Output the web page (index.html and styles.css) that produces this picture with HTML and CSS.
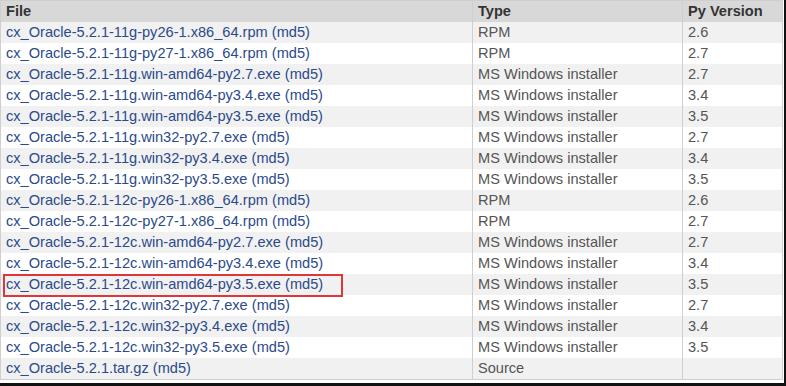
FILE: index.html
```html
<!DOCTYPE html>
<html>
<head>
<meta charset="utf-8">
<link rel="stylesheet" href="styles.css">
</head>
<body>
<div class="frame">
<table class="files">
<thead>
<tr><th class="c-file">File</th><th class="c-type">Type</th><th class="c-ver">Py Version</th></tr>
</thead>
<tbody>
<tr><td class="c-file"><a>cx_Oracle-5.2.1-11g-py26-1.x86_64.rpm</a> (<a>md5</a>)</td><td class="c-type">RPM</td><td class="c-ver">2.6</td></tr>
<tr><td class="c-file"><a>cx_Oracle-5.2.1-11g-py27-1.x86_64.rpm</a> (<a>md5</a>)</td><td class="c-type">RPM</td><td class="c-ver">2.7</td></tr>
<tr><td class="c-file"><a>cx_Oracle-5.2.1-11g.win-amd64-py2.7.exe</a> (<a>md5</a>)</td><td class="c-type">MS Windows installer</td><td class="c-ver">2.7</td></tr>
<tr><td class="c-file"><a>cx_Oracle-5.2.1-11g.win-amd64-py3.4.exe</a> (<a>md5</a>)</td><td class="c-type">MS Windows installer</td><td class="c-ver">3.4</td></tr>
<tr><td class="c-file"><a>cx_Oracle-5.2.1-11g.win-amd64-py3.5.exe</a> (<a>md5</a>)</td><td class="c-type">MS Windows installer</td><td class="c-ver">3.5</td></tr>
<tr><td class="c-file"><a>cx_Oracle-5.2.1-11g.win32-py2.7.exe</a> (<a>md5</a>)</td><td class="c-type">MS Windows installer</td><td class="c-ver">2.7</td></tr>
<tr><td class="c-file"><a>cx_Oracle-5.2.1-11g.win32-py3.4.exe</a> (<a>md5</a>)</td><td class="c-type">MS Windows installer</td><td class="c-ver">3.4</td></tr>
<tr><td class="c-file"><a>cx_Oracle-5.2.1-11g.win32-py3.5.exe</a> (<a>md5</a>)</td><td class="c-type">MS Windows installer</td><td class="c-ver">3.5</td></tr>
<tr><td class="c-file"><a>cx_Oracle-5.2.1-12c-py26-1.x86_64.rpm</a> (<a>md5</a>)</td><td class="c-type">RPM</td><td class="c-ver">2.6</td></tr>
<tr><td class="c-file"><a>cx_Oracle-5.2.1-12c-py27-1.x86_64.rpm</a> (<a>md5</a>)</td><td class="c-type">RPM</td><td class="c-ver">2.7</td></tr>
<tr><td class="c-file"><a>cx_Oracle-5.2.1-12c.win-amd64-py2.7.exe</a> (<a>md5</a>)</td><td class="c-type">MS Windows installer</td><td class="c-ver">2.7</td></tr>
<tr><td class="c-file"><a>cx_Oracle-5.2.1-12c.win-amd64-py3.4.exe</a> (<a>md5</a>)</td><td class="c-type">MS Windows installer</td><td class="c-ver">3.4</td></tr>
<tr><td class="c-file marked"><a>cx_Oracle-5.2.1-12c.win-amd64-py3.5.exe</a> (<a>md5</a>)<span class="highlight"></span></td><td class="c-type">MS Windows installer</td><td class="c-ver">3.5</td></tr>
<tr><td class="c-file"><a>cx_Oracle-5.2.1-12c.win32-py2.7.exe</a> (<a>md5</a>)</td><td class="c-type">MS Windows installer</td><td class="c-ver">2.7</td></tr>
<tr><td class="c-file"><a>cx_Oracle-5.2.1-12c.win32-py3.4.exe</a> (<a>md5</a>)</td><td class="c-type">MS Windows installer</td><td class="c-ver">3.4</td></tr>
<tr><td class="c-file"><a>cx_Oracle-5.2.1-12c.win32-py3.5.exe</a> (<a>md5</a>)</td><td class="c-type">MS Windows installer</td><td class="c-ver">3.5</td></tr>
<tr><td class="c-file"><a>cx_Oracle-5.2.1.tar.gz</a> (<a>md5</a>)</td><td class="c-type">Source</td><td class="c-ver"></td></tr>
</tbody>
</table>
</div>
</body>
</html>
```
FILE: styles.css
```css
html, body {
  margin: 0;
  padding: 0;
  background: #fff;
}
.frame {
  width: 786px;
  height: 386px;
  box-sizing: border-box;
  border-right: 2px solid #111;
  border-bottom: 3px solid #111;
  overflow: hidden;
}
.files {
  width: 783px;
  border-collapse: collapse;
  border: 1px solid #cfcfcf;
  font-family: "Liberation Sans", Arial, sans-serif;
  font-size: 14.6px;
  color: #555;
  table-layout: fixed;
}
.files th, .files td {
  height: 21px;
  padding: 0 5px;
  box-sizing: border-box;
  text-align: left;
  vertical-align: middle;
  white-space: nowrap;
  line-height: 21px;
}
.files th {
  background: #d8d8d8;
  color: #333;
  font-weight: bold;
}
.files tbody tr:nth-child(odd) td {
  background: #f1f1f1;
}
.c-file { width: 472px; }
.c-type { width: 210px; border-left: 1px solid #cfcfcf; }
.c-ver { border-left: 1px solid #cfcfcf; }
.files td.c-file { color: #2b4a8b; }
.files a { color: #2b4a8b; text-decoration: none; }
.marked { position: relative; }
.highlight {
  position: absolute;
  left: 2px;
  top: 0;
  width: 340px;
  height: 23px;
  box-sizing: border-box;
  border: 2px solid #e0363a;
}
```
